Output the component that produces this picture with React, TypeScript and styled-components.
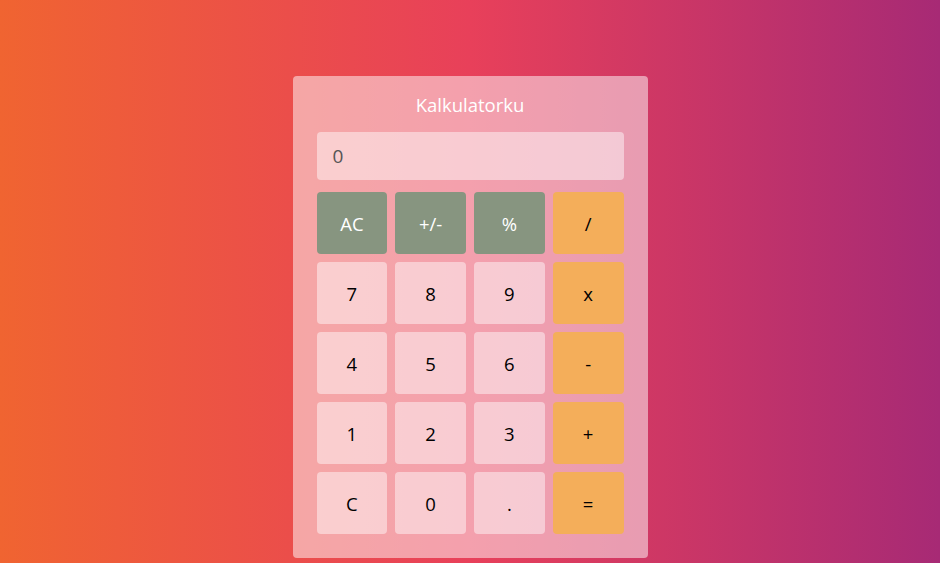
import React from "react";
import styled, { createGlobalStyle } from "styled-components";

const Global = createGlobalStyle`
  html, body { margin: 0; padding: 0; height: 100%; }
  body {
    font-family: "Open Sans", "Noto Sans", sans-serif;
    background: linear-gradient(to right, #f06431 0%, #e8405a 50%, #a72a75 100%);
    min-height: 563px;
  }
`;

const Page = styled.div`
  display: flex;
  justify-content: center;
  padding-top: 76px;
`;

const Card = styled.div`
  width: 355px;
  box-sizing: border-box;
  padding: 16px 24px 24px;
  background: rgba(255, 255, 255, 0.5);
  border-radius: 4px;
  display: flex;
  flex-direction: column;
`;

const Title = styled.h1`
  margin: 0 0 14px;
  font-size: 18.5px;
  line-height: 26px;
  font-weight: 400;
  color: #fff;
  text-align: center;
`;

const Display = styled.div`
  height: 48px;
  box-sizing: border-box;
  padding: 0 16px;
  display: flex;
  align-items: center;
  background: rgba(255, 255, 255, 0.46);
  border-radius: 4px;
  color: #555;
  font-size: 19px;
  margin-bottom: 12px;
`;

const Grid = styled.div`
  display: grid;
  grid-template-columns: repeat(4, 1fr);
  grid-auto-rows: 62px;
  gap: 8px;
`;

type Kind = "fn" | "num" | "op";

const Key = styled.button<{ $kind: Kind }>`
  border: none;
  border-radius: 4px;
  font-family: inherit;
  font-size: 18.5px;
  padding: 0;
  cursor: pointer;
  background: ${(p) =>
    p.$kind === "fn" ? "#879580" : p.$kind === "op" ? "#f4ae5a" : "rgba(255,255,255,0.46)"};
  color: ${(p) => (p.$kind === "fn" ? "#fff" : "#000")};
`;

const keys: [string, Kind][] = [
  ["AC", "fn"], ["+/-", "fn"], ["%", "fn"], ["/", "op"],
  ["7", "num"], ["8", "num"], ["9", "num"], ["x", "op"],
  ["4", "num"], ["5", "num"], ["6", "num"], ["-", "op"],
  ["1", "num"], ["2", "num"], ["3", "num"], ["+", "op"],
  ["C", "num"], ["0", "num"], [".", "num"], ["=", "op"],
];

export default function App() {
  return (
    <>
      <Global />
      <Page>
        <Card>
          <Title>Kalkulatorku</Title>
          <Display>0</Display>
          <Grid>
            {keys.map(([k, kind]) => (
              <Key key={k} $kind={kind}>{k}</Key>
            ))}
          </Grid>
        </Card>
      </Page>
    </>
  );
}
